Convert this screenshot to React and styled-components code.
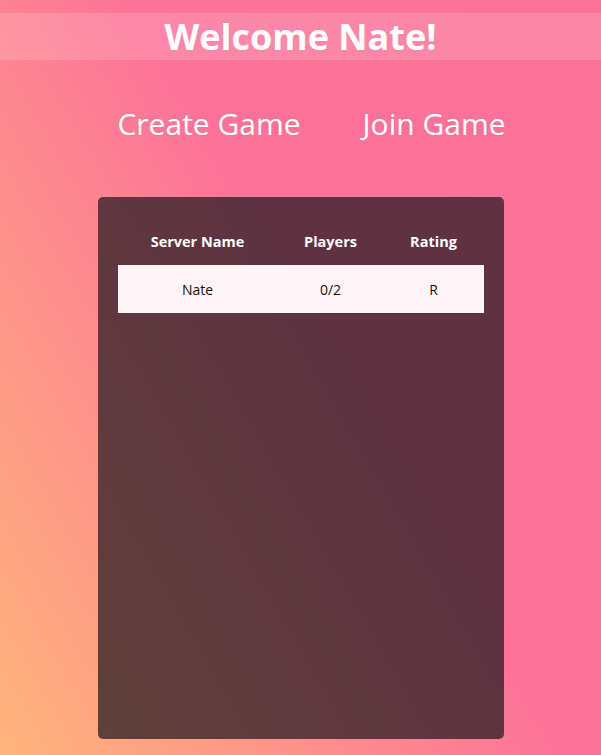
import React from "react";
import styled, { createGlobalStyle } from "styled-components";

const Global = createGlobalStyle`
  html, body { margin: 0; padding: 0; }
  body {
    min-height: 755px;
    font-family: "Open Sans", "Noto Sans", sans-serif;
    background: linear-gradient(60deg, #ffb47b 0%, #fc7299 55%, #fb7299 100%);
    background-attachment: fixed;
  }
`;

const Page = styled.div`
  height: 755px;
  display: flex;
  flex-direction: column;
  align-items: center;
  padding-top: 13px;
  box-sizing: border-box;
  overflow: hidden;
`;

const Title = styled.h1`
  margin: 0;
  width: 100%;
  height: 47px;
  display: flex;
  align-items: center;
  justify-content: center;
  background: rgba(255, 255, 255, 0.15);
  color: #fff;
  font-size: 36px;
  font-weight: 700;
  letter-spacing: 0;
`;

const Nav = styled.nav`
  display: flex;
  gap: 62px;
  margin-top: 40px;
  padding-left: 22px;
`;

const NavLink = styled.a`
  color: #fff;
  font-size: 30px;
  font-weight: 400;
  text-decoration: none;
  line-height: 48px;
  cursor: pointer;
`;

const Panel = styled.div`
  margin-top: 49px;
  width: 406px;
  height: 542px;
  box-sizing: border-box;
  padding: 20px;
  border-radius: 5px;
  background: rgba(42, 30, 36, 0.75);
`;

const Table = styled.table`
  width: 100%;
  border-collapse: collapse;
`;

const Th = styled.th`
  color: #fff;
  font-size: 14.5px;
  font-weight: 700;
  height: 48px;
  padding: 0;
  text-align: center;
  width: ${(p) => p.$w}px;
`;

const Row = styled.tr`
  background: #fff5f8;
`;

const Td = styled.td`
  color: #111;
  font-size: 14px;
  height: 48px;
  padding: 0;
  text-align: center;
`;

export default function App() {
  return (
    <>
      <Global />
      <Page>
        <Title>Welcome Nate!</Title>
        <Nav>
          <NavLink>Create Game</NavLink>
          <NavLink>Join Game</NavLink>
        </Nav>
        <Panel>
          <Table>
            <thead>
              <tr>
                <Th $w={160}>Server Name</Th>
                <Th $w={106}>Players</Th>
                <Th $w={100}>Rating</Th>
              </tr>
            </thead>
            <tbody>
              <Row>
                <Td>Nate</Td>
                <Td>0/2</Td>
                <Td>R</Td>
              </Row>
            </tbody>
          </Table>
        </Panel>
      </Page>
    </>
  );
}
